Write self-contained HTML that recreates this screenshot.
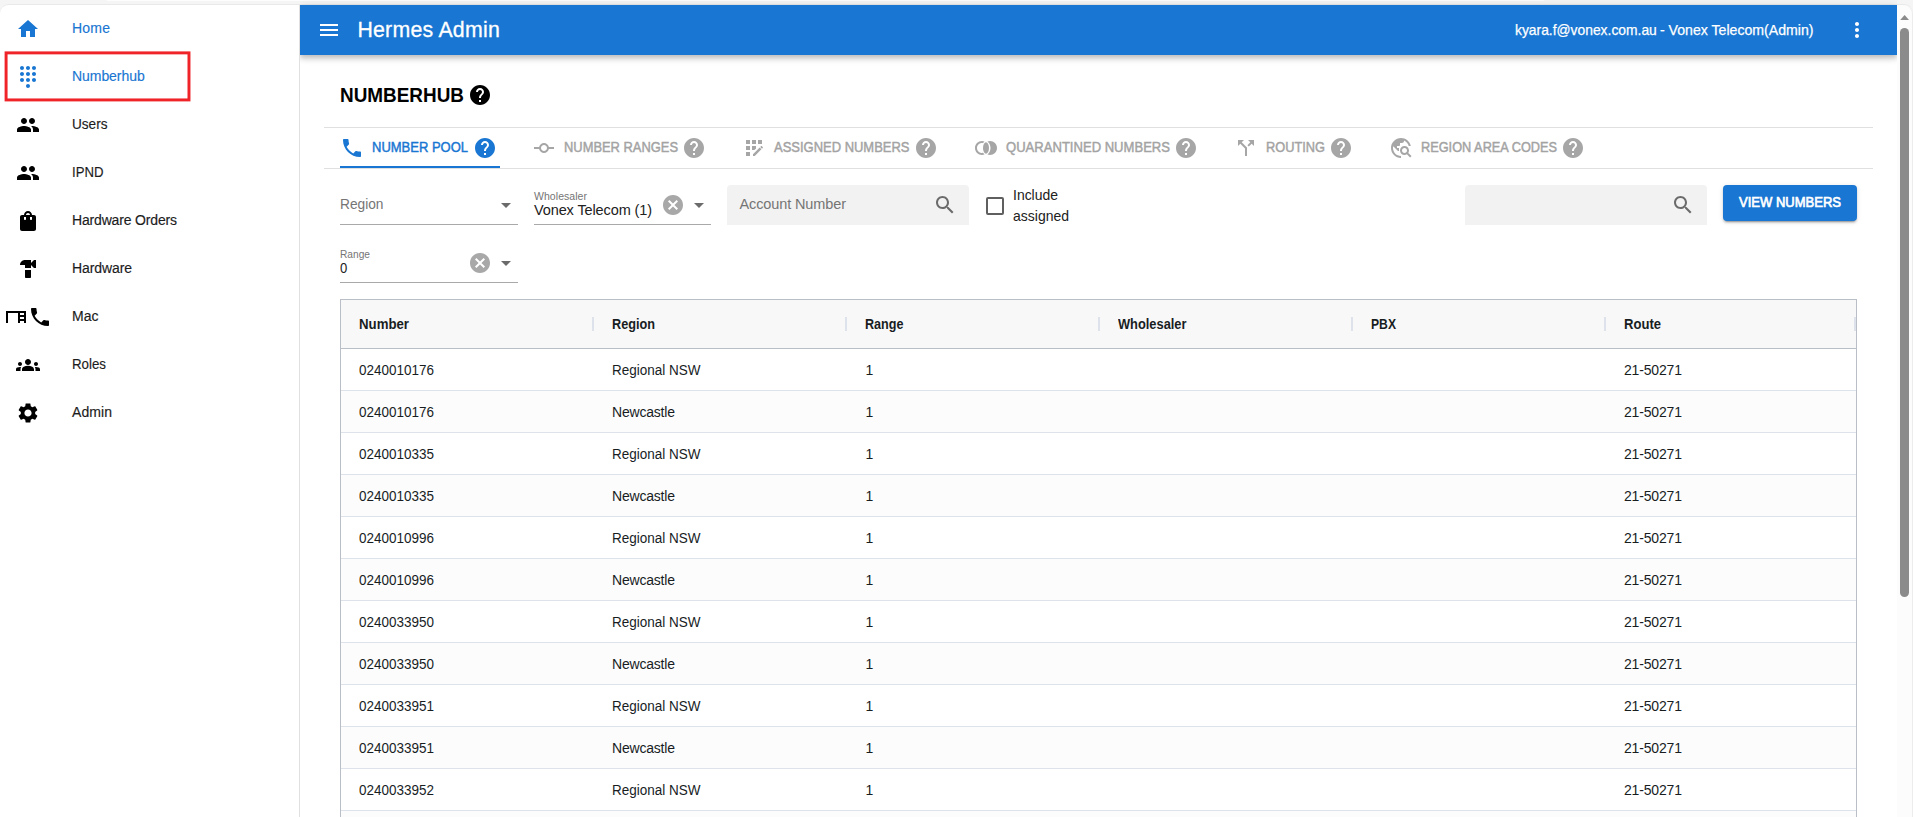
<!DOCTYPE html>
<html lang="en">
<head>
<meta charset="utf-8">
<title>Hermes Admin</title>
<style>
*{box-sizing:border-box;margin:0;padding:0}
html,body{width:1913px;height:817px;overflow:hidden;background:#f5f5f5}
body{position:relative;font-family:"Liberation Sans",sans-serif;color:rgba(0,0,0,.87);-webkit-font-smoothing:antialiased}
.abs{position:absolute}
.t{position:absolute;white-space:nowrap;line-height:1;transform-origin:0 50%}
svg.i{position:absolute;width:24px;height:24px;fill:currentColor}
/* chrome strip */
#strip{left:0;top:4px;width:1913px;height:813px;background:#fff;border-radius:9px 9px 0 0;border-top:1px solid #e9e9e9}
/* sidebar */
#side{left:299px;top:5px;width:1px;height:812px;background:#e0e0e0}
.nav{font-size:14px;left:72px;color:#1c1c1c;-webkit-text-stroke:0.15px}
.nav.on{color:#1976d2}
#redbox{left:4.8px;top:51.2px;width:185.5px;height:50px;border:2.9px solid #ee2127}
/* appbar */
#bar{left:0;top:5px;width:1597px;height:50px;background:#1976d2;box-shadow:0 2px 4px -1px rgba(0,0,0,.08),0 4px 5px 0 rgba(0,0,0,.14),0 1px 10px 0 rgba(0,0,0,.12);color:#fff}
/* scrollbar */
#sb{left:1897px;top:5px;width:16px;height:812px;background:#fcfcfc;border-right:1px solid #ececec;border-radius:0 9px 0 0}
#sbthumb{left:1900.1px;top:28px;width:8.9px;height:569px;border-radius:4.5px;background:#8b8b8b}
/* content */
.hl{background:#e0e0e0;height:1px}
.tab{font-size:14px;color:#a3a3a3}
.tab.on{color:#1976d2}
.gray{color:#a6a6a6}
.fld{background:#f2f2f2;border-radius:4px 4px 0 0}
.ul{height:1px;background:#a9a9a9}
#btn{left:1723px;top:185px;width:134px;height:36px;border-radius:4px;background:#1976d2;box-shadow:0 3px 1px -2px rgba(0,0,0,.2),0 2px 2px 0 rgba(0,0,0,.14),0 1px 5px 0 rgba(0,0,0,.12)}
/* grid */
#grid{left:340px;top:299px;width:1517px;height:530px;border:1px solid #babfc7;background:#fff;overflow:hidden}
#ghead{left:0;top:0;width:1515px;height:49px;background:#f8f8f8;border-bottom:1px solid #babfc7}
.row{left:0;width:1515px;height:42px;border-bottom:1px solid #dde2eb}
.row.odd{background:#fcfcfc}
.sep{width:2px;height:14.4px;top:16.8px;background:#dde2eb}
.hc{font-size:13px;font-weight:700;color:#181d1f}
.c{font-size:13px;color:#181d1f}
</style>
</head>
<body>
<div class="abs" style="left:104px;top:-9px;width:1443px;height:10px;background:#fdfdfd;border-radius:0 0 5px 5px"></div>
<div id="strip" class="abs"></div>
<div id="side" class="abs"></div>
<div class="abs" style="left:300px;top:0;width:1597px;height:90px;overflow:hidden"><div id="bar" class="abs"></div></div>
<div id="sb" class="abs"></div>
<div id="sbthumb" class="abs"></div>
<svg class="i" viewBox="0 0 24 24" style="left:16.00px;top:16.80px;width:24px;height:24px;color:#1976d2;"><path d="M10 20v-6h4v6h5v-8h3L12 3 2 12h3v8z"/></svg>
<span class="t nav on" style="left:72.00px;top:21.15px;font-size:14px;letter-spacing:0.218px;">Home</span>
<svg class="i" viewBox="0 0 24 24" style="left:16.00px;top:64.80px;width:24px;height:24px;color:#1976d2;"><path d="M12 19c-1.1 0-2 .9-2 2s.9 2 2 2 2-.9 2-2-.9-2-2-2zM6 1c-1.1 0-2 .9-2 2s.9 2 2 2 2-.9 2-2-.9-2-2-2zm0 6c-1.1 0-2 .9-2 2s.9 2 2 2 2-.9 2-2-.9-2-2-2zm0 6c-1.1 0-2 .9-2 2s.9 2 2 2 2-.9 2-2-.9-2-2-2zm12-8c1.1 0 2-.9 2-2s-.9-2-2-2-2 .9-2 2 .9 2 2 2zm-6 8c-1.1 0-2 .9-2 2s.9 2 2 2 2-.9 2-2-.9-2-2-2zm6 0c-1.1 0-2 .9-2 2s.9 2 2 2 2-.9 2-2-.9-2-2-2zm0-6c-1.1 0-2 .9-2 2s.9 2 2 2 2-.9 2-2-.9-2-2-2zm-6 0c-1.1 0-2 .9-2 2s.9 2 2 2 2-.9 2-2-.9-2-2-2zm0-6c-1.1 0-2 .9-2 2s.9 2 2 2 2-.9 2-2-.9-2-2-2z"/></svg>
<span class="t nav on" style="left:72.00px;top:69.15px;font-size:14px;letter-spacing:-0.057px;">Numberhub</span>
<svg class="i" viewBox="0 0 24 24" style="left:16.00px;top:112.80px;width:24px;height:24px;color:#000;"><path d="M16 11c1.66 0 2.990-1.340 2.990-3S17.660 5 16 5c-1.660 0-3 1.340-3 3s1.340 3 3 3zm-8 0c1.660 0 2.990-1.340 2.990-3S9.660 5 8 5C6.340 5 5 6.340 5 8s1.340 3 3 3zm0 2c-2.330 0-7 1.170-7 3.500V19h14v-2.500c0-2.330-4.670-3.500-7-3.500zm8 0c-.29 0-.62.02-.97.05 1.160.84 1.970 1.970 1.970 3.450V19h6v-2.500c0-2.330-4.670-3.500-7-3.500z"/></svg>
<span class="t nav" style="left:72.00px;top:117.15px;font-size:14px;transform:scaleX(0.9710);">Users</span>
<svg class="i" viewBox="0 0 24 24" style="left:16.00px;top:160.80px;width:24px;height:24px;color:#000;"><path d="M16 11c1.66 0 2.990-1.340 2.990-3S17.660 5 16 5c-1.660 0-3 1.340-3 3s1.340 3 3 3zm-8 0c1.660 0 2.990-1.340 2.990-3S9.660 5 8 5C6.340 5 5 6.340 5 8s1.340 3 3 3zm0 2c-2.330 0-7 1.170-7 3.500V19h14v-2.500c0-2.330-4.670-3.500-7-3.500zm8 0c-.29 0-.62.02-.97.05 1.160.84 1.970 1.970 1.970 3.450V19h6v-2.500c0-2.330-4.670-3.500-7-3.500z"/></svg>
<span class="t nav" style="left:72.00px;top:165.15px;font-size:14px;transform:scaleX(0.9417);">IPND</span>
<svg class="i" viewBox="0 0 24 24" style="left:16.00px;top:208.80px;width:24px;height:24px;color:#000;"><path d="M18 6h-2c0-2.210-1.790-4-4-4S8 3.790 8 6H6c-1.100 0-2 .9-2 2v12c0 1.100.9 2 2 2h12c1.100 0 2-.9 2-2V8c0-1.100-.9-2-2-2zm-8 4c0 .55-.45 1-1 1s-1-.45-1-1V8h2v2zm2-6c1.100 0 2 .9 2 2h-4c0-1.100.9-2 2-2zm4 6c0 .55-.45 1-1 1s-1-.45-1-1V8h2v2z"/></svg>
<span class="t nav" style="left:72.00px;top:213.15px;font-size:14px;letter-spacing:-0.169px;">Hardware Orders</span>
<svg class="i" viewBox="0 0 24 24" style="left:16.00px;top:256.80px;width:24px;height:24px;color:#000;"><path d="M18 3l-3 3V3H9C6.240 3 4 5.240 4 8h5v3h6V8l3 3h2V3h-2zM9 13v7c0 .55.45 1 1 1h4c.55 0 1-.45 1-1v-7H9z"/></svg>
<span class="t nav" style="left:72.00px;top:261.15px;font-size:14px;letter-spacing:-0.099px;">Hardware</span>
<svg class="i" viewBox="0 0 24 24" style="left:3.50px;top:304.80px;width:24px;height:24px;color:#000;"><path d="M2 6v12h2V8h10v10h2v-2h4v2h2V6H2zm18 2v2h-4V8h4zm-4 6v-2h4v2h-4z"/></svg>
<svg class="i" viewBox="0 0 24 24" style="left:27.50px;top:304.80px;width:24px;height:24px;color:#000;"><path d="M6.620 10.790c1.440 2.830 3.760 5.140 6.590 6.590l2.200-2.200c.27-.27.67-.36 1.020-.24 1.120.37 2.330.57 3.570.57.55 0 1 .45 1 1V20c0 .55-.45 1-1 1-9.390 0-17-7.610-17-17 0-.55.45-1 1-1h3.500c.55 0 1 .45 1 1 0 1.250.2 2.450.57 3.570.11.35.03.74-.25 1.020l-2.200 2.200z"/></svg>
<span class="t nav" style="left:72.00px;top:309.15px;font-size:14px;letter-spacing:0.025px;">Mac</span>
<svg class="i" viewBox="0 0 24 24" style="left:16.00px;top:352.80px;width:24px;height:24px;color:#000;"><path d="M12 12.750c1.630 0 3.070.39 4.240.9 1.080.48 1.760 1.560 1.760 2.730V18H6v-1.610c0-1.180.68-2.260 1.760-2.730 1.170-.52 2.610-.91 4.240-.91zM4 13c1.100 0 2-.9 2-2s-.9-2-2-2-2 .9-2 2 .9 2 2 2zm1.130 1.100c-.37-.06-.74-.1-1.130-.1-.99 0-1.930.21-2.780.58C.48 14.900 0 15.620 0 16.430V18h4.500v-1.610c0-.83.23-1.610.63-2.290zM20 13c1.100 0 2-.9 2-2s-.9-2-2-2-2 .9-2 2 .9 2 2 2zm4 3.430c0-.81-.48-1.530-1.220-1.850-.85-.37-1.790-.58-2.780-.58-.39 0-.76.04-1.130.1.4.68.63 1.460.63 2.290V18H24v-1.570zM12 6c1.660 0 3 1.340 3 3s-1.340 3-3 3-3-1.340-3-3 1.340-3 3-3z"/></svg>
<span class="t nav" style="left:72.00px;top:357.15px;font-size:14px;transform:scaleX(0.9499);">Roles</span>
<svg class="i" viewBox="0 0 24 24" style="left:16.00px;top:400.80px;width:24px;height:24px;color:#000;"><path d="M19.140 12.940c.04-.3.06-.61.06-.94 0-.32-.02-.64-.07-.94l2.030-1.580c.18-.14.23-.41.12-.61l-1.920-3.320c-.12-.22-.37-.29-.59-.22l-2.390.96c-.5-.38-1.030-.7-1.620-.94l-.36-2.540c-.04-.24-.24-.41-.48-.41h-3.840c-.24 0-.43.17-.47.41l-.36 2.540c-.59.24-1.130.57-1.620.94l-2.390-.96c-.22-.08-.47 0-.59.22L2.740 8.870c-.12.21-.08.47.12.61l2.030 1.580c-.05.3-.09.63-.09.94s.02.64.07.94l-2.030 1.580c-.18.14-.23.41-.12.61l1.920 3.320c.12.22.37.29.59.22l2.390-.96c.5.38 1.030.7 1.620.94l.36 2.540c.05.24.24.41.48.41h3.840c.24 0 .44-.17.47-.41l.36-2.540c.59-.24 1.130-.56 1.620-.94l2.390.96c.22.08.47 0 .59-.22l1.920-3.320c.12-.22.07-.47-.12-.61l-2.010-1.580zM12 15.600c-1.980 0-3.600-1.620-3.600-3.600s1.620-3.600 3.600-3.600 3.600 1.620 3.600 3.600-1.620 3.600-3.600 3.600z"/></svg>
<span class="t nav" style="left:72.00px;top:405.15px;font-size:14px;letter-spacing:0.079px;">Admin</span>
<svg class="abs" style="left:0;top:44px" width="200" height="64" viewBox="0 44 200 64"><rect x="6.08" y="52.88" width="182.9" height="47.05" fill="none" stroke="#ef2328" stroke-width="2.95"/></svg>
<svg class="i" viewBox="0 0 24 24" style="left:316.50px;top:18.00px;width:24px;height:24px;color:#fff;"><path d="M3 18h18v-2H3v2zm0-5h18v-2H3v2zm0-7v2h18V6H3z"/></svg>
<span class="t " style="left:357.40px;top:19.97px;font-size:21.3px;letter-spacing:0.247px;color:#fff;-webkit-text-stroke:0.3px;">Hermes Admin</span>
<span class="t " style="left:1515.00px;top:22.73px;font-size:14.5px;transform:scaleX(0.9548);color:#fff;-webkit-text-stroke:0.25px;">kyara.f@vonex.com.au</span>
<span class="t " style="left:1659.90px;top:22.73px;font-size:14.5px;transform:scaleX(0.9734);color:#fff;-webkit-text-stroke:0.25px;">- Vonex Telecom(Admin)</span>
<svg class="i" viewBox="0 0 24 24" style="left:1845.00px;top:18.00px;width:24px;height:24px;color:#fff;"><path d="M12 8c1.100 0 2-.9 2-2s-.9-2-2-2-2 .9-2 2 .9 2 2 2zm0 2c-1.100 0-2 .9-2 2s.9 2 2 2 2-.9 2-2-.9-2-2-2zm0 6c-1.100 0-2 .9-2 2s.9 2 2 2 2-.9 2-2-.9-2-2-2z"/></svg>
<svg class="abs" style="left:1897px;top:5px" width="16" height="20" viewBox="0 0 16 20"><path d="M3.2 15 L7.6 10 L12 15z" fill="#8b8b8b"/></svg>
<span class="t " style="left:340.00px;top:85.89px;font-size:19.5px;font-weight:700;transform:scaleX(0.9700);color:#000;">NUMBERHUB</span>
<svg class="i" viewBox="0 0 24 24" style="left:468.00px;top:83.00px;width:24px;height:24px;color:#000;"><path d="M12 2C6.480 2 2 6.480 2 12s4.480 10 10 10 10-4.480 10-10S17.520 2 12 2zm1 17h-2v-2h2v2zm2.070-7.750l-.9.92C13.450 12.900 13 13.500 13 15h-2v-.5c0-1.100.45-2.100 1.170-2.830l1.240-1.260c.37-.36.59-.86.59-1.410 0-1.100-.9-2-2-2s-2 .9-2 2H8c0-2.210 1.790-4 4-4s4 1.790 4 4c0 .88-.36 1.680-.93 2.250z"/></svg>
<div class="abs hl" style="left:324px;top:127px;width:1549px"></div>
<div class="abs hl" style="left:324px;top:168px;width:1549px"></div>
<div class="abs " style="left:340px;top:166px;width:160px;height:2px;background:#1976d2"></div>
<svg class="i" viewBox="0 0 24 24" style="left:340.00px;top:136.00px;width:24px;height:24px;color:#1976d2;"><path d="M6.620 10.790c1.440 2.830 3.760 5.140 6.590 6.590l2.200-2.200c.27-.27.67-.36 1.020-.24 1.120.37 2.330.57 3.570.57.55 0 1 .45 1 1V20c0 .55-.45 1-1 1-9.390 0-17-7.610-17-17 0-.55.45-1 1-1h3.500c.55 0 1 .45 1 1 0 1.250.2 2.450.57 3.570.11.35.03.74-.25 1.020l-2.200 2.200z"/></svg>
<span class="t tab on" style="left:372.00px;top:140.15px;font-size:14px;transform:scaleX(0.9279);-webkit-text-stroke:0.45px;">NUMBER POOL</span>
<svg class="i" viewBox="0 0 24 24" style="left:472.50px;top:136.00px;width:24px;height:24px;color:#1976d2;"><path d="M12 2C6.480 2 2 6.480 2 12s4.480 10 10 10 10-4.480 10-10S17.520 2 12 2zm1 17h-2v-2h2v2zm2.070-7.750l-.9.92C13.450 12.900 13 13.500 13 15h-2v-.5c0-1.100.45-2.100 1.170-2.830l1.240-1.260c.37-.36.59-.86.59-1.410 0-1.100-.9-2-2-2s-2 .9-2 2H8c0-2.210 1.790-4 4-4s4 1.790 4 4c0 .88-.36 1.680-.93 2.250z"/></svg>
<svg class="i" viewBox="0 0 24 24" style="left:532.00px;top:136.00px;width:24px;height:24px;color:#a6a6a6;"><path d="M16.900 11c-.46-2.280-2.480-4-4.900-4s-4.440 1.720-4.900 4H2v2h5.100c.46 2.280 2.480 4 4.900 4s4.440-1.720 4.900-4H22v-2h-5.100zM12 15c-1.660 0-3-1.340-3-3s1.340-3 3-3 3 1.340 3 3-1.340 3-3 3z"/></svg>
<span class="t tab" style="left:564.00px;top:140.15px;font-size:14px;transform:scaleX(0.9217);-webkit-text-stroke:0.45px;">NUMBER RANGES</span>
<svg class="i" viewBox="0 0 24 24" style="left:682.00px;top:136.00px;width:24px;height:24px;color:#a6a6a6;"><path d="M12 2C6.480 2 2 6.480 2 12s4.480 10 10 10 10-4.480 10-10S17.520 2 12 2zm1 17h-2v-2h2v2zm2.070-7.750l-.9.92C13.450 12.900 13 13.500 13 15h-2v-.5c0-1.100.45-2.100 1.170-2.830l1.240-1.260c.37-.36.59-.86.59-1.410 0-1.100-.9-2-2-2s-2 .9-2 2H8c0-2.210 1.790-4 4-4s4 1.790 4 4c0 .88-.36 1.680-.93 2.250z"/></svg>
<svg class="i" viewBox="0 0 24 24" style="left:742.00px;top:136.00px;width:24px;height:24px;color:#a6a6a6;"><path d="M10 4h4v4h-4zM4 16h4v4H4zm0-6h4v4H4zm0-6h4v4H4zm10 8.420V10h-4v4h2.420zm6.880-1.130l-1.170-1.170c-.16-.16-.42-.16-.58 0l-.88.88L20 12.750l.88-.88c.16-.16.16-.42 0-.58zM11 18.250V20h1.750l6.670-6.670-1.750-1.750zM16 4h4v4h-4z"/></svg>
<span class="t tab" style="left:774.00px;top:140.15px;font-size:14px;transform:scaleX(0.9265);-webkit-text-stroke:0.45px;">ASSIGNED NUMBERS</span>
<svg class="i" viewBox="0 0 24 24" style="left:914.00px;top:136.00px;width:24px;height:24px;color:#a6a6a6;"><path d="M12 2C6.480 2 2 6.480 2 12s4.480 10 10 10 10-4.480 10-10S17.520 2 12 2zm1 17h-2v-2h2v2zm2.070-7.750l-.9.92C13.450 12.900 13 13.500 13 15h-2v-.5c0-1.100.45-2.100 1.170-2.830l1.240-1.260c.37-.36.59-.86.59-1.410 0-1.100-.9-2-2-2s-2 .9-2 2H8c0-2.210 1.790-4 4-4s4 1.790 4 4c0 .88-.36 1.680-.93 2.250z"/></svg>
<svg class="i" viewBox="0 0 24 24" style="left:973.50px;top:136.00px;width:24px;height:24px;color:#a6a6a6;"><ellipse cx="12" cy="12" rx="3" ry="5.740"/><path d="M16.500 12c0 .97-.23 4.160-3.030 6.500.78.31 1.630.5 2.530.5 3.860 0 7-3.140 7-7s-3.140-7-7-7c-.9 0-1.750.19-2.530.5 2.800 2.340 3.030 5.530 3.030 6.500z"/><path d="M8 19c.9 0 1.750-.19 2.530-.5-.61-.51-1.100-1.070-1.490-1.630C8.710 16.950 8.360 17 8 17c-2.760 0-5-2.240-5-5s2.240-5 5-5c.36 0 .71.05 1.040.13.39-.56.88-1.120 1.490-1.630C9.750 5.190 8.900 5 8 5c-3.860 0-7 3.140-7 7s3.140 7 7 7z"/></svg>
<span class="t tab" style="left:1005.50px;top:140.15px;font-size:14px;transform:scaleX(0.9329);-webkit-text-stroke:0.45px;">QUARANTINED NUMBERS</span>
<svg class="i" viewBox="0 0 24 24" style="left:1174.00px;top:136.00px;width:24px;height:24px;color:#a6a6a6;"><path d="M12 2C6.480 2 2 6.480 2 12s4.480 10 10 10 10-4.480 10-10S17.520 2 12 2zm1 17h-2v-2h2v2zm2.070-7.750l-.9.92C13.450 12.900 13 13.500 13 15h-2v-.5c0-1.100.45-2.100 1.170-2.830l1.240-1.260c.37-.36.59-.86.59-1.410 0-1.100-.9-2-2-2s-2 .9-2 2H8c0-2.210 1.790-4 4-4s4 1.790 4 4c0 .88-.36 1.680-.93 2.250z"/></svg>
<svg class="i" viewBox="0 0 24 24" style="left:1233.50px;top:136.00px;width:24px;height:24px;color:#a6a6a6;"><path d="M14 4l2.290 2.290-2.880 2.880 1.420 1.420 2.880-2.880L20 10V4zm-4 0H4v6l2.290-2.290 4.710 4.700V20h2v-8.410l-5.290-5.300z"/></svg>
<span class="t tab" style="left:1265.50px;top:140.15px;font-size:14px;transform:scaleX(0.9140);-webkit-text-stroke:0.45px;">ROUTING</span>
<svg class="i" viewBox="0 0 24 24" style="left:1328.50px;top:136.00px;width:24px;height:24px;color:#a6a6a6;"><path d="M12 2C6.480 2 2 6.480 2 12s4.480 10 10 10 10-4.480 10-10S17.520 2 12 2zm1 17h-2v-2h2v2zm2.070-7.750l-.9.92C13.450 12.900 13 13.500 13 15h-2v-.5c0-1.100.45-2.100 1.170-2.830l1.240-1.260c.37-.36.59-.86.59-1.410 0-1.100-.9-2-2-2s-2 .9-2 2H8c0-2.210 1.790-4 4-4s4 1.790 4 4c0 .88-.36 1.680-.93 2.250z"/></svg>
<svg class="i" viewBox="0 0 24 24" style="left:1389.00px;top:136.00px;width:24px;height:24px;color:#a6a6a6;"><path d="M19.300 16.900c.4-.7.7-1.500.7-2.400 0-2.500-2-4.500-4.500-4.500S11 12 11 14.500s2 4.500 4.500 4.500c.9 0 1.700-.3 2.400-.7l3.200 3.200 1.400-1.400-3.200-3.200zm-3.800.1c-1.400 0-2.500-1.100-2.500-2.500s1.100-2.500 2.500-2.500 2.500 1.100 2.500 2.500-1.100 2.500-2.500 2.500zM12 20v2C6.480 22 2 17.520 2 12S6.480 2 12 2c4.840 0 8.870 3.440 9.800 8h-2.070c-.64-2.460-2.400-4.470-4.730-5.410V5c0 1.100-.9 2-2 2h-2v2c0 .55-.45 1-1 1H8v2h2v3H9l-4.790-4.790C4.080 10.790 4 11.380 4 12c0 4.410 3.590 8 8 8z"/></svg>
<span class="t tab" style="left:1421.00px;top:140.15px;font-size:14px;transform:scaleX(0.9105);-webkit-text-stroke:0.45px;">REGION AREA CODES</span>
<svg class="i" viewBox="0 0 24 24" style="left:1561.00px;top:136.00px;width:24px;height:24px;color:#a6a6a6;"><path d="M12 2C6.480 2 2 6.480 2 12s4.480 10 10 10 10-4.480 10-10S17.520 2 12 2zm1 17h-2v-2h2v2zm2.070-7.750l-.9.92C13.450 12.900 13 13.500 13 15h-2v-.5c0-1.100.45-2.100 1.170-2.830l1.240-1.260c.37-.36.59-.86.59-1.410 0-1.100-.9-2-2-2s-2 .9-2 2H8c0-2.210 1.790-4 4-4s4 1.790 4 4c0 .88-.36 1.680-.93 2.250z"/></svg>
<span class="t " style="left:340.00px;top:196.73px;font-size:14.5px;transform:scaleX(0.9467);color:#757575;">Region</span>
<svg class="i" viewBox="0 0 24 24" style="left:493.50px;top:192.50px;width:24px;height:24px;color:#6b6b6b;"><path d="M7 10l5 5 5-5z"/></svg>
<div class="abs ul" style="left:340px;top:224px;width:178px"></div>
<span class="t " style="left:534.00px;top:190.61px;font-size:10.5px;letter-spacing:0.053px;color:#757575;">Wholesaler</span>
<span class="t " style="left:534.00px;top:202.73px;font-size:14.5px;letter-spacing:-0.114px;color:#212121;">Vonex Telecom (1)</span>
<svg class="i" viewBox="0 0 24 24" style="left:660.90px;top:192.50px;width:24px;height:24px;color:#a8a8a8;"><path d="M12 2C6.470 2 2 6.470 2 12s4.470 10 10 10 10-4.470 10-10S17.530 2 12 2zm5 13.590L15.590 17 12 13.410 8.410 17 7 15.590 10.590 12 7 8.410 8.410 7 12 10.590 15.590 7 17 8.410 13.410 12 17 15.590z"/></svg>
<svg class="i" viewBox="0 0 24 24" style="left:686.70px;top:192.50px;width:24px;height:24px;color:#6b6b6b;"><path d="M7 10l5 5 5-5z"/></svg>
<div class="abs ul" style="left:534px;top:224px;width:177px"></div>
<div class="abs fld" style="left:727px;top:185px;width:242px;height:40px"></div>
<span class="t " style="left:739.50px;top:196.73px;font-size:14.5px;letter-spacing:-0.115px;color:#757575;">Account Number</span>
<svg class="i" viewBox="0 0 24 24" style="left:933.00px;top:192.50px;width:24px;height:24px;color:#6b6b6b;"><path d="M15.500 14h-.79l-.28-.27C15.410 12.590 16 11.110 16 9.500 16 5.910 13.090 3 9.500 3S3 5.910 3 9.500 5.910 16 9.500 16c1.610 0 3.090-.59 4.230-1.570l.27.28v.79l5 4.990L20.490 19l-4.990-5zm-6 0C7.010 14 5 11.990 5 9.500S7.010 5 9.500 5 14 7.010 14 9.500 11.990 14 9.500 14z"/></svg>
<div class="abs " style="left:986px;top:197px;width:18px;height:18px;border:2px solid #5f5f5f;border-radius:2px"></div>
<span class="t " style="left:1012.50px;top:187.73px;font-size:14.5px;transform:scaleX(0.9624);color:#212121;">Include</span>
<span class="t " style="left:1012.50px;top:208.73px;font-size:14.5px;transform:scaleX(0.9648);color:#212121;">assigned</span>
<div class="abs fld" style="left:1465px;top:185px;width:242px;height:40px"></div>
<svg class="i" viewBox="0 0 24 24" style="left:1670.50px;top:192.50px;width:24px;height:24px;color:#6b6b6b;"><path d="M15.500 14h-.79l-.28-.27C15.410 12.590 16 11.110 16 9.500 16 5.910 13.090 3 9.500 3S3 5.910 3 9.500 5.910 16 9.500 16c1.610 0 3.090-.59 4.230-1.570l.27.28v.79l5 4.990L20.490 19l-4.990-5zm-6 0C7.010 14 5 11.990 5 9.500S7.010 5 9.500 5 14 7.010 14 9.500 11.990 14 9.500 14z"/></svg>
<div class="abs " id="btn" style=""></div>
<span class="t " style="left:1739.00px;top:195.45px;font-size:14px;transform:scaleX(0.9300);color:#fff;-webkit-text-stroke:0.7px;">VIEW NUMBERS</span>
<span class="t " style="left:340.00px;top:248.61px;font-size:10.5px;transform:scaleX(0.9696);color:#757575;">Range</span>
<span class="t " style="left:340.40px;top:260.73px;font-size:14.5px;color:#212121;transform:scaleX(.9);">0</span>
<svg class="i" viewBox="0 0 24 24" style="left:468.00px;top:250.50px;width:24px;height:24px;color:#a8a8a8;"><path d="M12 2C6.470 2 2 6.470 2 12s4.470 10 10 10 10-4.470 10-10S17.530 2 12 2zm5 13.590L15.590 17 12 13.410 8.410 17 7 15.590 10.590 12 7 8.410 8.410 7 12 10.590 15.590 7 17 8.410 13.410 12 17 15.590z"/></svg>
<svg class="i" viewBox="0 0 24 24" style="left:493.50px;top:250.50px;width:24px;height:24px;color:#6b6b6b;"><path d="M7 10l5 5 5-5z"/></svg>
<div class="abs ul" style="left:340px;top:282px;width:178px"></div>
<div id="grid" class="abs">
<div class="abs " id="ghead" style=""></div>
<span class="t hc" style="left:18.00px;top:17.15px;font-size:14px;font-weight:700;transform:scaleX(0.9452);">Number</span>
<div class="abs sep" style="left:251px"></div>
<span class="t hc" style="left:271.00px;top:17.15px;font-size:14px;font-weight:700;transform:scaleX(0.9064);">Region</span>
<div class="abs sep" style="left:504px"></div>
<span class="t hc" style="left:524.00px;top:17.15px;font-size:14px;font-weight:700;transform:scaleX(0.8998);">Range</span>
<div class="abs sep" style="left:757px"></div>
<span class="t hc" style="left:777.00px;top:17.15px;font-size:14px;font-weight:700;transform:scaleX(0.9171);">Wholesaler</span>
<div class="abs sep" style="left:1010px"></div>
<span class="t hc" style="left:1030.00px;top:17.15px;font-size:14px;font-weight:700;transform:scaleX(0.8684);">PBX</span>
<div class="abs sep" style="left:1263px"></div>
<span class="t hc" style="left:1283.00px;top:17.15px;font-size:14px;font-weight:700;transform:scaleX(0.9328);">Route</span>
<div class="abs sep" style="left:1513px"></div>
<div class="abs row" style="top:49px"></div>
<span class="t c" style="left:18.00px;top:63.15px;font-size:14px;transform:scaleX(0.9632);">0240010176</span>
<span class="t c" style="left:271.00px;top:63.15px;font-size:14px;transform:scaleX(0.9639);">Regional NSW</span>
<span class="t c" style="left:524.50px;top:63.15px;font-size:14px;">1</span>
<span class="t c" style="left:1283.00px;top:63.15px;font-size:14px;letter-spacing:-0.167px;">21-50271</span>
<div class="abs row odd" style="top:91px"></div>
<span class="t c" style="left:18.00px;top:105.15px;font-size:14px;transform:scaleX(0.9632);">0240010176</span>
<span class="t c" style="left:271.00px;top:105.15px;font-size:14px;letter-spacing:-0.198px;">Newcastle</span>
<span class="t c" style="left:524.50px;top:105.15px;font-size:14px;">1</span>
<span class="t c" style="left:1283.00px;top:105.15px;font-size:14px;letter-spacing:-0.167px;">21-50271</span>
<div class="abs row" style="top:133px"></div>
<span class="t c" style="left:18.00px;top:147.15px;font-size:14px;transform:scaleX(0.9632);">0240010335</span>
<span class="t c" style="left:271.00px;top:147.15px;font-size:14px;transform:scaleX(0.9639);">Regional NSW</span>
<span class="t c" style="left:524.50px;top:147.15px;font-size:14px;">1</span>
<span class="t c" style="left:1283.00px;top:147.15px;font-size:14px;letter-spacing:-0.167px;">21-50271</span>
<div class="abs row odd" style="top:175px"></div>
<span class="t c" style="left:18.00px;top:189.15px;font-size:14px;transform:scaleX(0.9632);">0240010335</span>
<span class="t c" style="left:271.00px;top:189.15px;font-size:14px;letter-spacing:-0.198px;">Newcastle</span>
<span class="t c" style="left:524.50px;top:189.15px;font-size:14px;">1</span>
<span class="t c" style="left:1283.00px;top:189.15px;font-size:14px;letter-spacing:-0.167px;">21-50271</span>
<div class="abs row" style="top:217px"></div>
<span class="t c" style="left:18.00px;top:231.15px;font-size:14px;transform:scaleX(0.9632);">0240010996</span>
<span class="t c" style="left:271.00px;top:231.15px;font-size:14px;transform:scaleX(0.9639);">Regional NSW</span>
<span class="t c" style="left:524.50px;top:231.15px;font-size:14px;">1</span>
<span class="t c" style="left:1283.00px;top:231.15px;font-size:14px;letter-spacing:-0.167px;">21-50271</span>
<div class="abs row odd" style="top:259px"></div>
<span class="t c" style="left:18.00px;top:273.15px;font-size:14px;transform:scaleX(0.9632);">0240010996</span>
<span class="t c" style="left:271.00px;top:273.15px;font-size:14px;letter-spacing:-0.198px;">Newcastle</span>
<span class="t c" style="left:524.50px;top:273.15px;font-size:14px;">1</span>
<span class="t c" style="left:1283.00px;top:273.15px;font-size:14px;letter-spacing:-0.167px;">21-50271</span>
<div class="abs row" style="top:301px"></div>
<span class="t c" style="left:18.00px;top:315.15px;font-size:14px;transform:scaleX(0.9632);">0240033950</span>
<span class="t c" style="left:271.00px;top:315.15px;font-size:14px;transform:scaleX(0.9639);">Regional NSW</span>
<span class="t c" style="left:524.50px;top:315.15px;font-size:14px;">1</span>
<span class="t c" style="left:1283.00px;top:315.15px;font-size:14px;letter-spacing:-0.167px;">21-50271</span>
<div class="abs row odd" style="top:343px"></div>
<span class="t c" style="left:18.00px;top:357.15px;font-size:14px;transform:scaleX(0.9632);">0240033950</span>
<span class="t c" style="left:271.00px;top:357.15px;font-size:14px;letter-spacing:-0.198px;">Newcastle</span>
<span class="t c" style="left:524.50px;top:357.15px;font-size:14px;">1</span>
<span class="t c" style="left:1283.00px;top:357.15px;font-size:14px;letter-spacing:-0.167px;">21-50271</span>
<div class="abs row" style="top:385px"></div>
<span class="t c" style="left:18.00px;top:399.15px;font-size:14px;transform:scaleX(0.9632);">0240033951</span>
<span class="t c" style="left:271.00px;top:399.15px;font-size:14px;transform:scaleX(0.9639);">Regional NSW</span>
<span class="t c" style="left:524.50px;top:399.15px;font-size:14px;">1</span>
<span class="t c" style="left:1283.00px;top:399.15px;font-size:14px;letter-spacing:-0.167px;">21-50271</span>
<div class="abs row odd" style="top:427px"></div>
<span class="t c" style="left:18.00px;top:441.15px;font-size:14px;transform:scaleX(0.9632);">0240033951</span>
<span class="t c" style="left:271.00px;top:441.15px;font-size:14px;letter-spacing:-0.198px;">Newcastle</span>
<span class="t c" style="left:524.50px;top:441.15px;font-size:14px;">1</span>
<span class="t c" style="left:1283.00px;top:441.15px;font-size:14px;letter-spacing:-0.167px;">21-50271</span>
<div class="abs row" style="top:469px"></div>
<span class="t c" style="left:18.00px;top:483.15px;font-size:14px;transform:scaleX(0.9632);">0240033952</span>
<span class="t c" style="left:271.00px;top:483.15px;font-size:14px;transform:scaleX(0.9639);">Regional NSW</span>
<span class="t c" style="left:524.50px;top:483.15px;font-size:14px;">1</span>
<span class="t c" style="left:1283.00px;top:483.15px;font-size:14px;letter-spacing:-0.167px;">21-50271</span>
<div class="abs row odd" style="top:511px"></div>
<span class="t c" style="left:18.00px;top:525.15px;font-size:14px;transform:scaleX(0.9632);">0240033952</span>
<span class="t c" style="left:271.00px;top:525.15px;font-size:14px;letter-spacing:-0.198px;">Newcastle</span>
<span class="t c" style="left:524.50px;top:525.15px;font-size:14px;">1</span>
<span class="t c" style="left:1283.00px;top:525.15px;font-size:14px;letter-spacing:-0.167px;">21-50271</span>
</div>
</body>
</html>
